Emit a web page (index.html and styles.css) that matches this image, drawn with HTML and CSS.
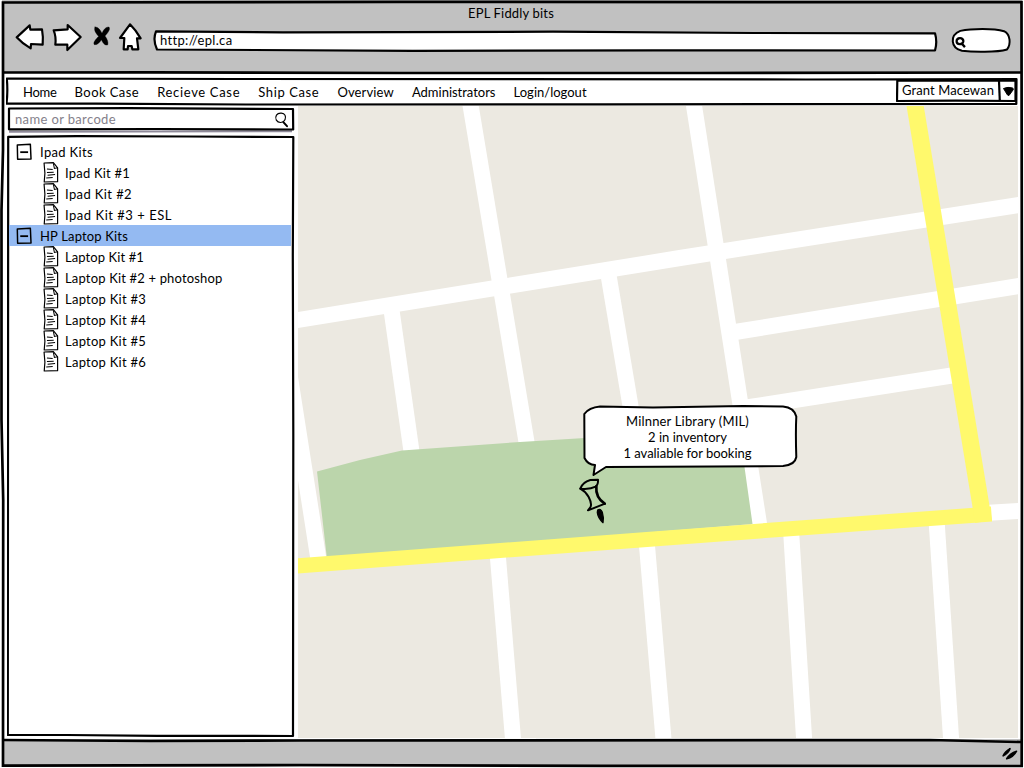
FILE: index.html
```html
<!DOCTYPE html>
<html lang="en">
<head>
<meta charset="utf-8">
<title>EPL Fiddly bits</title>
<link rel="stylesheet" href="styles.css">
</head>
<body>
<svg class="defs" width="0" height="0">
  <symbol id="doc" viewBox="130 97 46 62">
    <path d="M132.500 100L160 99L172.500 114L172.500 155L133 156L135 130Z" fill="#fff" stroke="#000" stroke-width="3.5" stroke-linejoin="round"/>
    <path d="M160 101L163 116L173 114M141 118L158 119M141 128L161 127M143 136L165 134M139 144L158 143" fill="none" stroke="#000" stroke-width="3"/>
  </symbol>
  <symbol id="minus" viewBox="48 40 49 53">
    <path d="M52 45L92 43L94 88L53 89Z" fill="none" stroke="#000" stroke-width="4.5" stroke-linejoin="round"/>
    <path d="M61 67L85 67" stroke="#000" stroke-width="5.5"/>
  </symbol>
</svg>
<div class="window">
  <header class="chrome">
    <div class="title"><span data-width="86">EPL Fiddly bits</span></div>
    <div class="tools">
      <svg class="buttons" viewBox="45 65 384 90" fill="#fff" stroke="#000" stroke-width="6.5" stroke-linejoin="round" stroke-linecap="round">
        <path d="M50 111L89 75L91 88L126 87Q130 108 128 133L93 131L92 144Q68 131 50 111Z"/>
        <path d="M161 90L203 87L203 74L242 110L202 149L202 133L166 133Q169 109 161 90Z"/>
        <path d="M285 80C294 79 302 90 306 99C310 89 317 79 327 80C332 87 324 97 315 107C322 116 326 127 323 134C313 136 308 126 304 118C299 127 292 134 283 133C278 126 288 117 296 108C287 99 281 89 285 80Z" fill="#000" stroke-width="1"/>
        <path d="M390 72L360 113L373 113L371 147L383 147L384 137L395 137L397 147L415 147L411 114L422 114Q408 90 390 72Z"/>
      </svg>
      <div class="address">
        <svg class="frame" viewBox="0 0 785 22"><path d="M3 1.3L130 2.3L400 1.7L600 3L782 3.3Q784.5 12 782 20.5L500 20.4L260 20.8L4 19.5Q-.5 10 3 1.3Z"/></svg>
        <span data-width="72">http://epl.ca</span>
      </div>
      <svg class="finder" viewBox="692 82 184 80" fill="#fff" stroke="#000" stroke-width="6">
        <path d="M720 93C755 86 820 85 852 94C872 104 873 134 861 149C830 158 758 157 725 153C690 144 688 106 720 93Z"/>
        <path d="M711 119C719 111 730 116 729 125C727 136 709 135 709 125C708 119 713 115 718 115M725 132L734 142" stroke-width="7"/>
      </svg>
    </div>
  </header>
  <div class="body">
    <nav class="menu">
      <svg class="frame" viewBox="0 0 1012 29"><path d="M.8 1.5L230 2L500 2.2L800 2.5L1010.5 2.2L1010.3 27L600 27.3L240 27.5L90 26.7L.5 26.7Q2 14 .8 1.5Z"/></svg>
      <div class="links">
        <a><span data-width="33.500">Home</span></a>
        <a><span data-width="64.500">Book Case</span></a>
        <a><span data-width="83">Recieve Case</span></a>
        <a><span data-width="61">Ship Case</span></a>
        <a><span data-width="56.500">Overview</span></a>
        <a><span data-width="83.500">Administrators</span></a>
        <a><span data-width="73">Login/logout</span></a>
      </div>
      <div class="user">
        <svg class="frame" viewBox="0 0 122 24"><path d="M1.300 1.500L60 1.700L119.500 1.300L119.500 22L60 21.700L1 22Z"/><path d="M103 2L103.800 22"/><path d="M107.500 9.500Q112 7.500 116.500 9Q118 9.500 117 11L113 16.500L111.500 16Z" fill="#000" stroke-width="1"/></svg>
        <span data-width="92">Grant Macewan</span>
      </div>
    </nav>
    <div class="panes">
      <aside class="side">
        <div class="search">
          <svg class="frame" viewBox="0 0 288 26"><path class="shade" d="M2 24.800L285 24.200"/><path d="M2 1.500L120 1.200L286 2L286.200 22.500L150 22L2 22.300Z"/></svg>
          <span data-width="101">name or barcode</span>
          <svg class="glass" viewBox="822 332 48 50" fill="#fff" stroke="#000" stroke-width="3.500" stroke-linecap="round"><path d="M844 338C830 337 824 348 829 359C835 369 850 368 855 358C859 347 855 339 844 338Z"/><path d="M850 365L861 377" stroke-width="6"/></svg>
        </div>
        <div class="tree">
          <svg class="frame" viewBox="0 0 288 603"><path d="M1.200 1.800L70 1.200L180 1.500L286.300 2L285.800 120L286.300 300L286 601L150 600.800L60 600L.8 600L1 300Z"/></svg>
          <ul>
            <li><svg class="minus"><use href="#minus"/></svg><span data-width="53">Ipad Kits</span></li>
            <li class="kit"><svg class="doc"><use href="#doc"/></svg><span data-width="65">Ipad Kit #1</span></li>
            <li class="kit"><svg class="doc"><use href="#doc"/></svg><span data-width="67">Ipad Kit #2</span></li>
            <li class="kit"><svg class="doc"><use href="#doc"/></svg><span data-width="107">Ipad Kit #3 + ESL</span></li>
            <li class="selected"><svg class="minus"><use href="#minus"/></svg><span data-width="88">HP Laptop Kits</span></li>
            <li class="kit"><svg class="doc"><use href="#doc"/></svg><span data-width="79">Laptop Kit #1</span></li>
            <li class="kit"><svg class="doc"><use href="#doc"/></svg><span data-width="157.500">Laptop Kit #2 + photoshop</span></li>
            <li class="kit"><svg class="doc"><use href="#doc"/></svg><span data-width="81">Laptop Kit #3</span></li>
            <li class="kit"><svg class="doc"><use href="#doc"/></svg><span data-width="81">Laptop Kit #4</span></li>
            <li class="kit"><svg class="doc"><use href="#doc"/></svg><span data-width="81">Laptop Kit #5</span></li>
            <li class="kit"><svg class="doc"><use href="#doc"/></svg><span data-width="81">Laptop Kit #6</span></li>
          </ul>
        </div>
      </aside>
      <main class="map">
        <svg class="streets" viewBox="298 106 720 632">
          <g fill="none" stroke="#fff" stroke-width="16">
            <path d="M469 96L527 445"/>
            <path d="M692.5 96L760 530"/>
            <path d="M290 321.3L680 258L1025 204"/>
            <path d="M735 332L1025 285"/>
            <path d="M743 408L955 375"/>
            <path d="M391.500 310L412 455"/>
            <path d="M608.500 275L632 415"/>
            <path d="M281 320L319.500 566"/>
            <path d="M497.500 552L513.500 745"/>
            <path d="M646.500 540L664 745"/>
            <path d="M791 530L804.500 745"/>
            <path d="M936.500 520L951.500 745"/>
            <path d="M985 513L1025 510.500"/>
          </g>
          <path fill="#bbd5ab" d="M317 471.500L360 460L402 450.500L520 442L585 438L739 428L752.500 524L327 559Z"/>
          <path fill="none" stroke="#fff96c" stroke-width="15" d="M290 566.500L660 538.500L800 528L991.500 514"/>
          <path fill="none" stroke="#fff96c" stroke-width="17" d="M913.500 96L983.500 521.500"/>
        </svg>
        <div class="callout">
          <svg viewBox="0 0 216 72"><path d="M17 1.500L70 2.500L160 1L200 1.500Q211 2.500 213.300 11.500Q212.500 28 213.300 52Q212 60 200 61L130 61.500L23 62L10.500 70L12 60Q5 60 1.500 53L1.300 9Q6 2.500 17 1.500Z" fill="#fff" stroke="#000" stroke-width="2" stroke-linejoin="round"/></svg>
          <p><span data-width="123">Milnner Library (MIL)</span><br><span data-width="79">2 in inventory</span><br><span data-width="128">1 avaliable for booking</span></p>
        </div>
        <svg class="pin" viewBox="54 261 90 141" stroke="#000" fill="none" stroke-width="6" stroke-linejoin="round" stroke-linecap="round">
          <path d="M61 296Q68 276 91 270L114 269Q115 284 107 290Q90 299 61 296Z"/>
          <path d="M61 296Q76 304 86 321Q97 342 91 352L84 361L135 341"/>
          <path d="M109 289Q106 322 134 341" stroke-width="8"/>
          <path d="M113 360Q122 354 127 367Q132 383 129 398Q113 382 112 367Z" fill="#000" stroke-width="4"/>
        </svg>
      </main>
    </div>
  </div>
  <footer class="status">
    <svg class="grip" viewBox="604 262 54 46"><path d="M610 292Q615 279 631 270Q626 284 610 292ZM621 301Q631 284 651 278Q641 297 621 301Z" stroke="#000" stroke-width="5" stroke-linejoin="round"/></svg>
  </footer>
  <svg class="outline" viewBox="0 0 1024 768" fill="none" stroke="#000">
    <path d="M3 2.500L400 1.800L1021.500 2.200L1022 400L1021.700 766L600 765.800L300 765L3 765.700L3.200 500L1.500 420L1.500 210L3 150Z" stroke-width="2.700"/>
    <path d="M3 72.500L150 72.300L400 73L700 73L1021 72.500" stroke-width="2.700"/>
    <path d="M3 740L150 741L300 740.500L930 740L1021 742" stroke-width="2.600"/>
  </svg>
</div>
<script src="labels.js"></script>
</body>
</html>
```
FILE: styles.css
```css
* { box-sizing: border-box; }
body { margin: 0; font: 13px/16px Lato, "Open Sans", sans-serif; color: #000; overflow: hidden; }
.defs, .outline, .frame { position: absolute; }
span { white-space: nowrap; }
.window { position: relative; display: flex; flex-direction: column; width: 1024px; height: 768px; background: #fff; }
.outline { inset: 0; pointer-events: none; }
.frame { left: 0; top: 0; width: 100%; height: 100%; fill: #fff; stroke: #000; stroke-width: 2.2; stroke-linejoin: round; }
.frame .shade { stroke: #8f8a9a; stroke-width: 2; }

.chrome { height: 73px; flex: none; margin: 0 2px; background: #c1c1c1; }
.title { height: 22px; padding: 6px 0 0 466px; line-height: 15px; }
.tools { display: flex; align-items: flex-start; padding-left: 13px; }
.buttons { width: 128px; height: 30px; }
.address { position: relative; width: 785px; height: 22px; margin: 8px 0 0 10px; padding: 2px 0 0 7px; }
.address span, .user span, .search span { position: relative; }
.finder { width: 61px; height: 27px; margin: 5px 0 0 13px; }

.body { flex: 1; display: flex; flex-direction: column; min-height: 0; padding: 4px 6px 1px; }
.menu { position: relative; display: flex; justify-content: space-between; width: 1012px; height: 29px; }
.links { position: relative; display: flex; gap: 18.1px; padding: 7px 0 0 17px; }
.user { position: relative; width: 122px; height: 24px; margin-top: 2px; padding: 3px 0 0 6px; }
.panes { flex: 1; display: flex; min-height: 0; }
.side { width: 292px; padding-left: 1px; }
.search { position: relative; display: flex; justify-content: space-between; width: 288px; height: 26px; margin-top: 1px; padding: 4px 5px 0 8px; color: #85818b; }
.glass { position: relative; width: 16px; height: 17px; }
.tree { position: relative; width: 288px; height: 603px; margin-top: 2px; padding: 6px 4px 0 2px; }
.tree ul { position: relative; list-style: none; margin: 0; padding: 0; }
.tree li { display: flex; align-items: center; height: 21px; padding-left: 7px; gap: 8px; }
.tree li.kit { padding-left: 34px; gap: 6px; }
.tree li.selected { background: #94baf2; }
.minus { width: 16px; height: 18px; }
.doc { width: 16px; height: 21px; }

.map { position: relative; width: 720px; height: 632px; background: #ece9e1; }
.streets { display: block; width: 720px; height: 632px; }
.callout { position: absolute; left: 285px; top: 299px; width: 216px; height: 72px; }
.callout svg { position: absolute; inset: 0; width: 216px; height: 72px; }
.callout p { position: relative; margin: 0; padding: 8px 7px 0 0; text-align: center; }
.pin { position: absolute; left: 280px; top: 371px; width: 30px; height: 47px; }

.status { height: 28px; flex: none; margin: 0 2px 1px; background: #c1c1c1; display: flex; justify-content: flex-end; padding: 7px 3px 0 0; }
.grip { width: 18px; height: 15px; }
```
FILE: labels.js
```js
// Tracks each label so that it fills its nominal width.
document.querySelectorAll('[data-width]').forEach(function (el) {
  var target = Number(el.dataset.width);
  var natural = el.getBoundingClientRect().width;
  el.style.letterSpacing = (target - natural) / el.textContent.length + 'px';
});
```
